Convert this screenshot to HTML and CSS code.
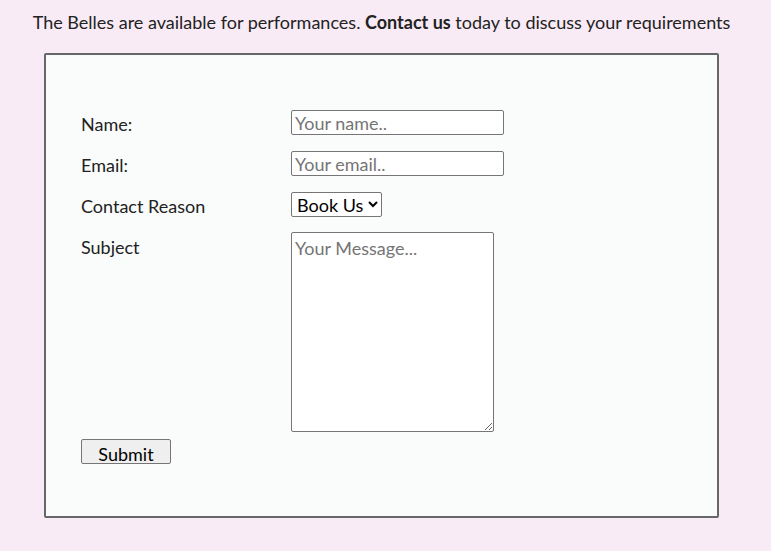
FILE: index.html
```html
<!DOCTYPE html>
<html>
<head>
<meta charset="utf-8">
<link rel="stylesheet" href="styles.css">
</head>
<body>
<p class="intro">The Belles are available for performances. <strong>Contact us</strong> today to discuss your requirements</p>
<div class="box">
  <form class="form">
    <label class="lbl" for="n">Name:</label>
    <input class="field" id="n" type="text" placeholder="Your name..">
    <label class="lbl" for="e">Email:</label>
    <input class="field" id="e" type="text" placeholder="Your email..">
    <label class="lbl" for="r">Contact Reason</label>
    <div><select class="sel" id="r"><option>Book Us</option></select></div>
    <label class="lbl" for="m">Subject</label>
    <textarea class="msg" id="m" placeholder="Your Message..."></textarea>
  </form>
  <button class="submit" type="button">Submit</button>
</div>
</body>
</html>
```
FILE: styles.css
```css
html, body {
  margin: 0;
  padding: 0;
  background: #f9ebf6;
  font-family: Lato, "Open Sans", sans-serif;
  color: #222;
}
.intro {
  margin: 10px 0 0;
  padding-right: 8px;
  height: 24px;
  line-height: 24px;
  font-size: 18px;
  text-align: center;
  color: #222;
}
.intro strong { font-weight: 700; }
.box {
  box-sizing: border-box;
  margin: 19px 0 0 44px;
  width: 675px;
  height: 465px;
  border: 2px solid #656769;
  border-radius: 2px;
  background: #fafcfb;
  padding: 55px 0 0 35px;
}
.form {
  display: grid;
  grid-template-columns: 210px auto;
  row-gap: 16px;
  align-items: start;
}
.lbl {
  font-size: 18px;
  color: #222;
  line-height: 21px;
  height: 25px;
  padding-top: 4px;
  box-sizing: border-box;
}
.field {
  box-sizing: border-box;
  width: 213px;
  height: 25px;
  border: 1px solid #767676;
  border-radius: 2px;
  padding: 0 3px;
  font-family: Lato, sans-serif;
  font-size: 18px;
  background: #fff;
  color: #000;
}
.field::placeholder, .msg::placeholder { color: #757575; }
.sel {
  box-sizing: border-box;
  height: 25px;
  width: 91px;
  font-family: Lato, sans-serif;
  font-size: 18px;
  border: 1px solid #767676;
  border-radius: 2px;
  background: #fff;
  color: #000;
  padding: 0 0 0 1px;
}
.msg {
  box-sizing: border-box;
  margin-top: -1px;
  width: 203px;
  height: 200px;
  border: 1px solid #767676;
  border-radius: 2px;
  padding: 4px 3px 2px;
  font-family: Lato, sans-serif;
  font-size: 18px;
  background: #fff;
  resize: both;
}
.submit {
  display: block;
  margin-top: 7px;
  box-sizing: border-box;
  width: 90px;
  height: 25px;
  padding: 5px 0 0;
  font-family: Lato, sans-serif;
  font-size: 18px;
  line-height: 18px;
  color: #000;
  background: #efefef;
  border: 1px solid #767676;
  border-radius: 2px;
  overflow: hidden;
}
```
